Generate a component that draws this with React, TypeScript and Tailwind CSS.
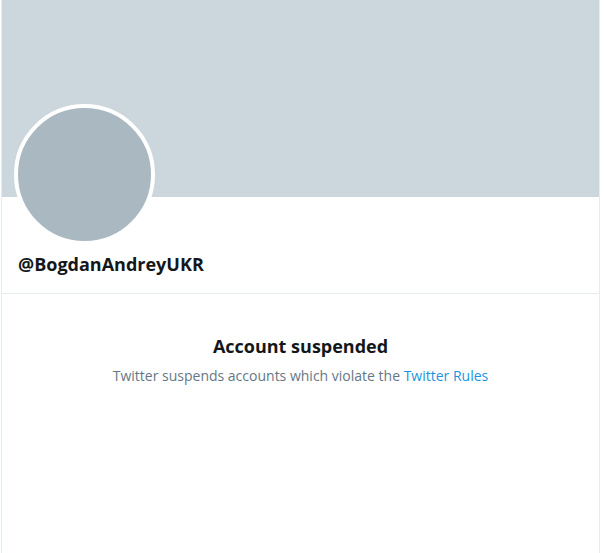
const Profile = () => {
    return (
        <div className="min-h-screen w-full bg-white" style={{ fontFamily: '"Open Sans", "Noto Sans", sans-serif' }}>
            <div className="ml-[1px] w-[599px] min-h-screen border-x border-[#e6ecf0]">
                {/* banner */}
                <div className="h-[197px] w-full bg-[#ccd6dd]"></div>
                {/* avatar + handle */}
                <div className="border-b border-[#e6ecf0] px-3 pb-[17px]">
                    <div className="-mt-[93px] h-[141px] w-[141px] rounded-full border-4 border-white bg-[#aab8c2]"></div>
                    <h2 className="mt-[7px] pl-[4px] text-[18px] font-bold leading-6 text-[#14171a]">@BogdanAndreyUKR</h2>
                </div>
                {/* suspended notice */}
                <div className="flex flex-col items-center pt-[40px] text-center">
                    <h1 className="text-[18px] font-bold leading-6 text-[#14171a]">Account suspended</h1>
                    <p className="mt-2 text-[14px] leading-5 text-[#657786]">
                        Twitter suspends accounts which violate the{" "}
                        <a href="#" className="text-[#1b95e0]">Twitter Rules</a>
                    </p>
                </div>
            </div>
        </div>
    )
}

export default Profile;
